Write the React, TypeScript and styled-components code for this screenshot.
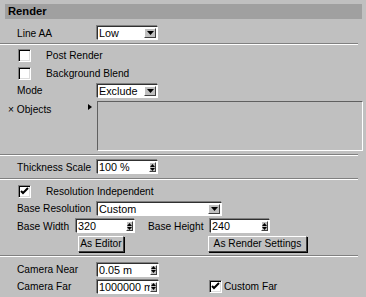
import styled, { createGlobalStyle } from "styled-components";

const Global = createGlobalStyle`
  html, body {
    margin: 0;
    background: #c0c0c0;
  }
  body {
    font-family: "Liberation Sans", Arial, sans-serif;
    font-size: 10.2px;
    color: #000;
  }
`;

const Panel = styled.div`
  width: 366px;
  height: 297px;
  display: flex;
  flex-direction: column;
  overflow: hidden;
  background: #c0c0c0;
`;

const Header = styled.div`
  flex: none;
  margin: 4px 4px 0 5px;
  height: 15px;
  line-height: 15px;
  padding-left: 3px;
  background: #a0a0a0;
  font-weight: bold;
  font-size: 11.2px;
`;

const Row = styled.div<{ $h: number; $mt?: number; $pl?: number }>`
  flex: none;
  display: flex;
  align-items: center;
  height: ${(p) => p.$h}px;
  margin-top: ${(p) => p.$mt ?? 0}px;
  padding-left: ${(p) => p.$pl ?? 17}px;
  white-space: nowrap;
`;

const Label = styled.span<{ $w?: number; $ml?: number }>`
  flex: none;
  width: ${(p) => (p.$w ? `${p.$w}px` : "auto")};
  margin-left: ${(p) => p.$ml ?? 0}px;
`;

const Separator = styled.div<{ $mt: number }>`
  flex: none;
  margin-top: ${(p) => p.$mt}px;
  width: 358px;
  height: 0;
  border-top: 1px solid #808080;
  border-bottom: 1px solid #fff;
`;

const Field = styled.div<{ $w: number; $h?: number }>`
  flex: none;
  box-sizing: border-box;
  width: ${(p) => p.$w}px;
  height: ${(p) => p.$h ?? 14}px;
  display: flex;
  align-items: center;
  background: #fff;
  border-top: 1px solid #303030;
  border-left: 1px solid #303030;
  border-right: 1px solid #fff;
  border-bottom: 1px solid #fff;
  box-shadow: -1px -1px 0 #808080;
  overflow: hidden;
`;

const FieldText = styled.span`
  flex: 1;
  padding-left: 1px;
  overflow: hidden;
  line-height: 12px;
  font-size: 10.8px;
`;

const ArrowButton = styled.div`
  flex: none;
  box-sizing: border-box;
  width: 12px;
  height: 10px;
  margin-right: 1px;
  display: flex;
  align-items: center;
  justify-content: center;
  background: #c0c0c0;
  border-top: 1px solid #fff;
  border-left: 1px solid #fff;
  border-right: 1px solid #404040;
  border-bottom: 1px solid #404040;
`;

const Spinner = styled.div`
  flex: none;
  box-sizing: border-box;
  width: 7px;
  height: 10px;
  margin-right: 1px;
  display: flex;
  flex-direction: column;
  align-items: center;
  justify-content: space-around;
  background: #c0c0c0;
  border-top: 1px solid #fff;
  border-left: 1px solid #fff;
  border-right: 1px solid #404040;
  border-bottom: 1px solid #404040;
`;

const Box = styled.div<{ $ml?: number; $mr: number }>`
  flex: none;
  box-sizing: border-box;
  width: 13px;
  height: 13px;
  margin-left: ${(p) => p.$ml ?? 1}px;
  margin-right: ${(p) => p.$mr}px;
  background: #fff;
  border-top: 1px solid #808080;
  border-left: 1px solid #808080;
  border-right: 1px solid #fff;
  border-bottom: 1px solid #fff;
  box-shadow: inset 1px 1px 0 #000, inset -1px -1px 0 #dcdcdc;
  display: flex;
  align-items: center;
  justify-content: center;
`;

const ObjectsRow = styled.div`
  flex: none;
  display: flex;
  height: 50px;
  margin-top: 2px;
`;

const ObjectsLabel = styled.div`
  flex: none;
  box-sizing: border-box;
  width: 97px;
  padding: 3px 5px 0 8px;
  display: flex;
  justify-content: space-between;
  align-items: flex-start;
`;

const ListBox = styled.div`
  flex: none;
  box-sizing: border-box;
  width: 266px;
  height: 50px;
  border-top: 1px solid #606060;
  border-left: 1px solid #606060;
  border-right: 1px solid #fff;
  border-bottom: 1px solid #fff;
`;

const Button = styled.div<{ $w: number; $ml?: number }>`
  flex: none;
  box-sizing: border-box;
  width: ${(p) => p.$w}px;
  height: 16px;
  margin-left: ${(p) => p.$ml ?? 0}px;
  display: flex;
  align-items: center;
  justify-content: center;
  background: #c0c0c0;
  border-top: 1px solid #fff;
  border-left: 1px solid #fff;
  border-right: 1px solid #404040;
  border-bottom: 1px solid #404040;
  box-shadow: 1px 1px 0 #000;
`;

const Down = () => (
  <svg width="7" height="4" viewBox="0 0 7 4">
    <path d="M0 0h7L3.5 4z" fill="#000" />
  </svg>
);

const UpDown = () => (
  <>
    <svg width="5" height="3" viewBox="0 0 5 3">
      <path d="M2.5 0L5 3H0z" fill="#000" />
    </svg>
    <svg width="5" height="3" viewBox="0 0 5 3">
      <path d="M0 0h5L2.5 3z" fill="#000" />
    </svg>
  </>
);

const Check = () => (
  <svg width="9" height="9" viewBox="0 0 9 9">
    <path d="M1 4l2 2 5-5" stroke="#000" strokeWidth="2" fill="none" />
  </svg>
);

function Select({ value, w }: { value: string; w: number }) {
  return (
    <Field $w={w}>
      <FieldText>{value}</FieldText>
      <ArrowButton>
        <Down />
      </ArrowButton>
    </Field>
  );
}

function Spin({ value, w }: { value: string; w: number }) {
  return (
    <Field $w={w}>
      <FieldText>{value}</FieldText>
      <Spinner>
        <UpDown />
      </Spinner>
    </Field>
  );
}

export default function App() {
  return (
    <Panel>
      <Global />
      <Header>Render</Header>

      <Row $h={18} $mt={5}>
        <Label $w={80}>Line AA</Label>
        <Select value="Low" w={61} />
      </Row>
      <Separator $mt={1} />

      <Row $h={19} $mt={1}>
        <Box $mr={15} />
        <Label>Post Render</Label>
      </Row>
      <Row $h={17}>
        <Box $mr={15} />
        <Label>Background Blend</Label>
      </Row>
      <Row $h={17}>
        <Label $w={80}>Mode</Label>
        <Select value="Exclude" w={61} />
      </Row>

      <ObjectsRow>
        <ObjectsLabel>
          <span>× Objects</span>
          <svg width="4" height="6" viewBox="0 0 4 6" style={{ marginTop: 0 }}>
            <path d="M0 0l4 3-4 3z" fill="#000" />
          </svg>
        </ObjectsLabel>
        <ListBox />
      </ObjectsRow>
      <Separator $mt={3} />

      <Row $h={18} $mt={2}>
        <Label $w={80}>Thickness Scale</Label>
        <Spin value="100 %" w={61} />
      </Row>
      <Separator $mt={2} />

      <Row $h={18} $mt={2}>
        <Box $mr={15}>
          <Check />
        </Box>
        <Label>Resolution Independent</Label>
      </Row>
      <Row $h={17}>
        <Label $w={80}>Base Resolution</Label>
        <Select value="Custom" w={125} />
      </Row>
      <Row $h={18}>
        <Label $w={59}>Base Width</Label>
        <Spin value="320" w={59} />
        <Label $w={62} $ml={13}>
          Base Height
        </Label>
        <Spin value="240" w={60} />
      </Row>
      <Row $h={17} $pl={78}>
        <Button $w={46}>As Editor</Button>
        <Button $w={99} $ml={84}>
          As Render Settings
        </Button>
      </Row>
      <Separator $mt={3} />

      <Row $h={17} $mt={4}>
        <Label $w={80}>Camera Near</Label>
        <Spin value="0.05 m" w={62} />
      </Row>
      <Row $h={17}>
        <Label $w={80}>Camera Far</Label>
        <Spin value="1000000 m" w={62} />
        <Box $ml={50} $mr={2}>
          <Check />
        </Box>
        <Label>Custom Far</Label>
      </Row>
    </Panel>
  );
}
